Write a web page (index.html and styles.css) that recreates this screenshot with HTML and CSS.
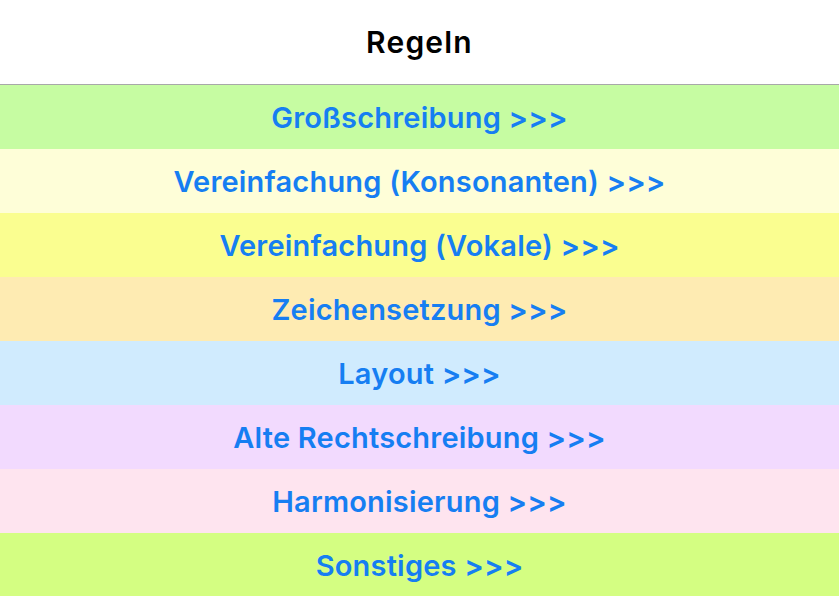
FILE: index.html
```html
<!DOCTYPE html>
<html>
<head>
<meta charset="utf-8">
<link rel="stylesheet" href="styles.css">
</head>
<body>
<header class="bar"><h1 class="title">Regeln</h1></header>
<main class="list">
  <div class="row r1">Großschreibung &gt;&gt;&gt;</div>
  <div class="row r2">Vereinfachung (Konsonanten) &gt;&gt;&gt;</div>
  <div class="row r3">Vereinfachung (Vokale) &gt;&gt;&gt;</div>
  <div class="row r4">Zeichensetzung &gt;&gt;&gt;</div>
  <div class="row r5">Layout &gt;&gt;&gt;</div>
  <div class="row r6">Alte Rechtschreibung &gt;&gt;&gt;</div>
  <div class="row r7">Harmonisierung &gt;&gt;&gt;</div>
  <div class="row r8">Sonstiges &gt;&gt;&gt;</div>
</main>
</body>
</html>
```
FILE: styles.css
```css
html, body { margin: 0; padding: 0; background: #fff; }
body { font-family: Inter, "Liberation Sans", sans-serif; width: 839px; height: 596px; overflow: hidden; }
.bar { height: 84px; border-bottom: 1px solid #a8a8a8; display: flex; align-items: center; justify-content: center; background: #fff; }
.title { margin: 0; font-size: 30px; font-weight: 600; color: #000; letter-spacing: 1.2px; }
.list { display: flex; flex-direction: column; }
.row { height: 64px; display: flex; align-items: center; justify-content: center; color: #167ef2; font-size: 29px; font-weight: 600; letter-spacing: 0.2px; }
.r1 { background: #c6fca2; }
.r2 { background: #fefed8; }
.r3 { background: #fafe90; }
.r4 { background: #feebb2; }
.r5 { background: #d0ebfe; }
.r6 { background: #f2dafe; }
.r7 { background: #fee4ef; }
.r8 { background: #d4fe82; }
```
